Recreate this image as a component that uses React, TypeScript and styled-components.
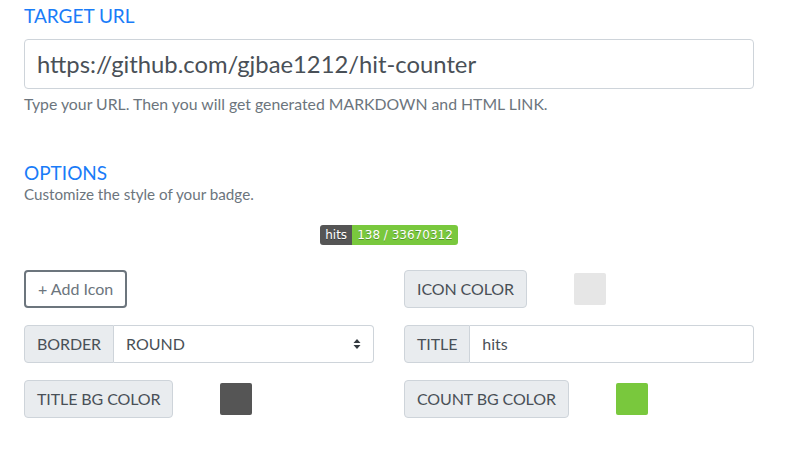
import React from 'react'
import styled, { createGlobalStyle } from 'styled-components'

const GlobalStyle = createGlobalStyle`
    * { box-sizing: border-box; }
    body {
        margin: 0;
        background: #fff;
        font-family: Lato, "Open Sans", sans-serif;
        color: #495057;
    }
`

const Page = styled.div`
    width: 730px;
    margin-left: 24px;
    padding-top: 5px;
`

const Heading = styled.h5`
    margin: 0;
    font-size: 19px;
    font-weight: 400;
    line-height: 1.2;
    color: #1a7cf8;
`

const UrlInput = styled.input`
    display: block;
    width: 100%;
    height: 50px;
    margin-top: 11px;
    padding: 0 12px;
    font-family: inherit;
    font-size: 23.8px;
    color: #495057;
    border: 1px solid #ced4da;
    border-radius: 4px;
    outline: none;
`

const Help = styled.p`
    margin: 5px 0 0;
    font-size: 15.8px;
    color: #6c757d;
`

const OptionsBlock = styled.div`
    margin-top: 49px;
`

const Sub = styled.p`
    margin: 0;
    font-size: 15.2px;
    color: #6c757d;
`

const BadgeRow = styled.div`
    display: flex;
    justify-content: center;
    margin: 22px 0 25px;
`

const Badge = styled.div`
    display: flex;
    height: 20px;
    border-radius: 3px;
    overflow: hidden;
    font-family: "DejaVu Sans", Verdana, sans-serif;
    font-size: 12px;
    line-height: 20px;
    color: #fff;
    text-shadow: 0 1px 0 rgba(1, 1, 1, 0.3);
`

const BadgePart = styled.span<{ $bg: string }>`
    background: ${(p) => p.$bg};
    padding: 0 5px;
`

const Grid = styled.div`
    display: grid;
    grid-template-columns: 1fr 1fr;
    column-gap: 30px;
    row-gap: 17px;
`

const Cell = styled.div`
    display: flex;
    align-items: stretch;
    height: 38px;
`

const OutlineButton = styled.button`
    height: 38px;
    padding: 0 12px;
    font-family: inherit;
    font-size: 16px;
    color: #6c757d;
    background: #fff;
    border: 2px solid #6c757d;
    border-radius: 4px;
`

const Group = styled.div`
    display: flex;
    width: 100%;
    height: 38px;
`

const Addon = styled.span<{ $solo?: boolean }>`
    display: flex;
    align-items: center;
    padding: 0 12px;
    font-size: 16px;
    letter-spacing: -0.1px;
    color: #495057;
    background: #e9ecef;
    border: 1px solid #ced4da;
    border-radius: ${(p) => (p.$solo ? '4px' : '4px 0 0 4px')};
    white-space: nowrap;
`

const Field = styled.div`
    flex: 1;
    display: flex;
    align-items: center;
    justify-content: space-between;
    padding: 0 12px;
    font-size: 16px;
    color: #495057;
    border: 1px solid #ced4da;
    border-left: none;
    border-radius: 0 4px 4px 0;
`

const Swatch = styled.span<{ $color: string }>`
    align-self: center;
    width: 32px;
    height: 32px;
    margin-left: 47px;
    border-radius: 2px;
    background: ${(p) => p.$color};
`

const Arrows = () => (
    <svg width="8" height="12" viewBox="0 0 8 12">
        <path d="M4 1 L7.5 5 H0.5 Z M4 11 L7.5 7 H0.5 Z" fill="#343a40" />
    </svg>
)

export default function App() {
    return (
        <Page>
            <GlobalStyle />
            <Heading>TARGET URL</Heading>
            <UrlInput readOnly value="https://github.com/gjbae1212/hit-counter" />
            <Help>Type your URL. Then you will get generated MARKDOWN and HTML LINK.</Help>

            <OptionsBlock>
                <Heading>OPTIONS</Heading>
                <Sub>Customize the style of your badge.</Sub>
            </OptionsBlock>

            <BadgeRow>
                <Badge>
                    <BadgePart $bg="#555">hits</BadgePart>
                    <BadgePart $bg="#79c83d">138 / 33670312</BadgePart>
                </Badge>
            </BadgeRow>

            <Grid>
                <Cell>
                    <OutlineButton>+ Add Icon</OutlineButton>
                </Cell>
                <Cell>
                    <Addon $solo>ICON COLOR</Addon>
                    <Swatch $color="#e6e6e6" />
                </Cell>
                <Cell>
                    <Group>
                        <Addon>BORDER</Addon>
                        <Field>
                            ROUND
                            <Arrows />
                        </Field>
                    </Group>
                </Cell>
                <Cell>
                    <Group>
                        <Addon>TITLE</Addon>
                        <Field>hits</Field>
                    </Group>
                </Cell>
                <Cell>
                    <Addon $solo>TITLE BG COLOR</Addon>
                    <Swatch $color="#555" />
                </Cell>
                <Cell>
                    <Addon $solo>COUNT BG COLOR</Addon>
                    <Swatch $color="#79c83d" />
                </Cell>
            </Grid>
        </Page>
    )
}
